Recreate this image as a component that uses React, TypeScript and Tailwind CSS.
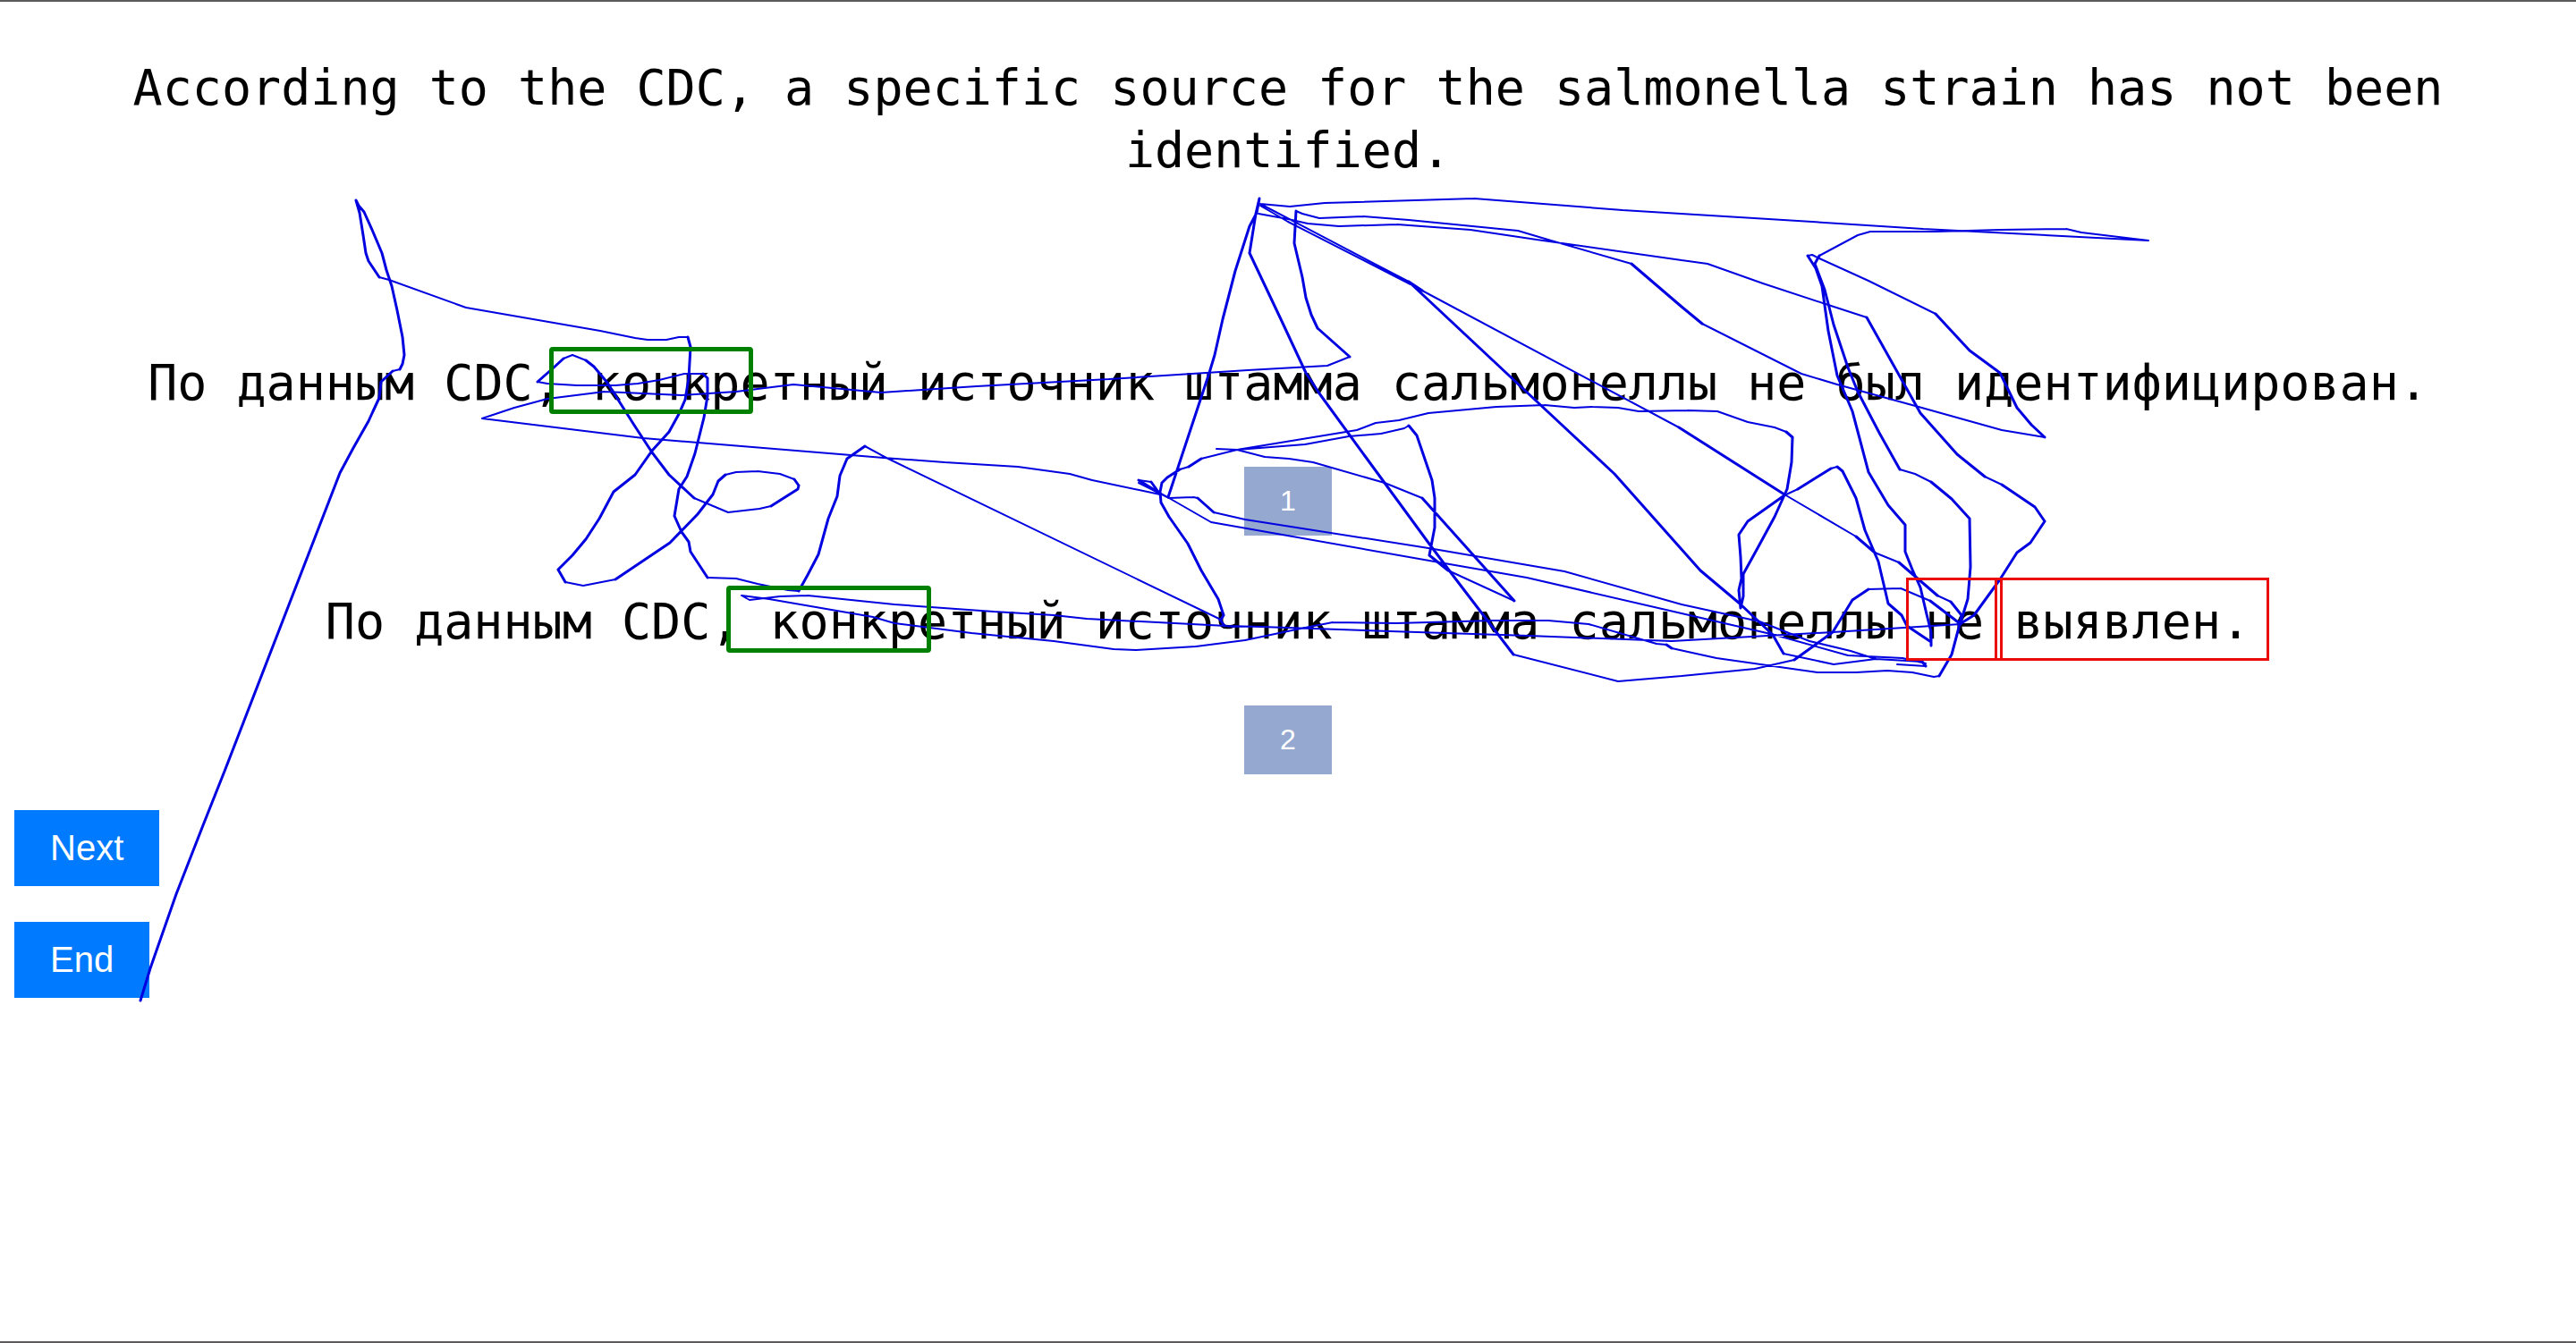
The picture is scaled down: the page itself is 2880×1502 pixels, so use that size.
import React from "react";

type Mark = "fixation" | "error";
type Part = { text: string; mark?: Mark };

const options: { id: number; parts: Part[] }[] = [
  {
    id: 1,
    parts: [
      { text: "По данным CDC," },
      { text: " конкр", mark: "fixation" },
      { text: "етный источник штамма сальмонеллы не был идентифицирован." },
    ],
  },
  {
    id: 2,
    parts: [
      { text: "По данным CDC," },
      { text: " конкр", mark: "fixation" },
      { text: "етный источник штамма сальмонеллы " },
      { text: "не", mark: "error" },
      { text: " " },
      { text: "выявлен.", mark: "error" },
    ],
  },
];

const markClass: Record<Mark, string> = {
  fixation:
    "absolute z-20 -inset-x-[15px] -top-[5px] bottom-0 rounded-sm border-[5px] border-[#008000]",
  error:
    "absolute z-20 -inset-x-[21px] -top-[14px] -bottom-[9px] border-[3px] border-[#ea0a0a]",
};

/* Recorded cursor trail, in page coordinates. */
const trail: string[] = [
  "157,1119 168,1083 197,1000 227,923 252,860 380,529 395,501 412,471 417,460 424,445 426,427 439,415 447,413 450,407 452,397 450,377 444,347 438,320 432,302 427,283 416,257 407,237 401,230 398,224 402,238 406,263 409,283 412,292 424,310 435,313 521,344 671,370 710,378 724,380 745,380 759,377 769,377 772,388 770,423 766,447 759,463 748,483 729,504 710,531 686,550 670,580 655,603 640,621 624,637 632,651 652,655 688,648 749,607 780,575 797,553 803,538 811,531 823,528 847,527 872,530 888,536 893,543 892,547 862,566 849,569 814,573 776,557 748,531 729,506 710,477 691,447 679,428 664,410 655,403 640,397 630,401 618,412 601,427 612,429 645,431 688,431 713,429 737,425 765,418 786,418 791,423 791,443 787,467 777,507 768,533 759,547 754,577 762,595 770,606 772,617 791,646 823,647 847,653 881,660 893,661 903,643 915,620 926,580 936,555 939,532 947,513 967,499 991,512 1365,693 1368,688 1362,670 1343,638 1328,608 1307,578 1298,562 1297,550 1299,540 1305,534 1319,525 1329,522 1343,513 1383,503 1517,481 1538,473 1564,470 1597,462 1673,455 1727,453 1760,456 1780,455 1809,456 1832,460 1887,459 1920,460 1954,472 1984,478 1997,483 2004,489 2003,517 1998,547 1984,578 1965,613 1949,642 1949,667 1946,680 1944,660 1947,647 1946,623 1944,598 1954,583 1995,554 2010,547 2047,524 2054,522 2060,527 2075,557 2085,593 2100,628 2108,662 2111,675 2126,688 2132,700 2159,718 2159,722 2159,707 2154,687 2147,657 2138,637 2130,617 2130,587 2111,565 2089,528 2071,460 2054,420 2044,370 2037,320 2030,300 2021,286 2026,285 2034,289 2089,314 2164,351 2202,392 2236,417 2255,456 2271,475 2286,489 2238,481 2145,455 2054,430 2014,418 1903,362 1880,343 1824,295 1734,269 1697,258 1575,246 1524,242 1475,244 1456,239 1449,236 1447,272 1456,310 1460,333 1466,352 1473,367 1509,399 1484,409 1395,414 1240,424 1092,432 985,439 887,430 823,438 762,442 676,438 612,446 575,456 539,468 719,490 988,512 1056,517 1138,522 1196,530 1221,537 1297,553 1287,539 1273,537 1294,550 1307,557 1334,556 1339,557 1357,573 1392,581 1597,613 1749,639 1880,676 1967,695 2023,717 2069,728 2097,737 2149,740 2153,745 2121,743",
  "1273,540 1307,557 1354,584 1615,630 1707,646 1880,686 1984,710 2066,733 2127,736 2153,742",
  "1306,556 1352,417 1358,397 1367,357 1381,303 1397,253 1405,238 1408,222 1404,239 1397,283 1432,357 1460,417 1475,440 1526,510 1597,607 1624,643 1692,732 1809,762 1880,756 1962,748 2006,738 2049,707 2071,671 2089,659 2125,658 2158,672 2192,698 2049,707 1869,717 1709,711 1615,708 1410,701 1371,700 1215,692 1178,688 1111,684 1000,676 903,666 872,667 838,671 829,666 860,670 976,690 1000,697 1086,708 1178,717 1245,726 1270,727 1337,723 1392,716 1454,703 1490,696 1561,697 1669,694 1731,694 1776,698 1852,720 1863,721 1869,725 1919,736 2032,752 2075,752 2110,750 2138,752 2162,757 2168,756 2182,732 2191,698 2207,688 2236,648 2255,618 2270,607 2286,583 2275,567 2238,542 2219,533 2188,508 2147,462 2087,355 2044,341 1971,317 1909,295 1880,291 1718,268 1644,257 1562,251 1497,253 1462,250 1440,245 1407,239",
  "1364,693 1369,700 1380,701",
  "1409,228 1442,231 1481,227 1648,222 1814,235 2010,247 2150,256 2402,269 2327,260 2310,256 2236,257 2164,259 2091,259 2077,263 2034,286 2029,295 2040,324 2050,363 2066,411 2077,438 2101,484 2124,525 2141,530 2159,539 2182,558 2202,580 2203,634 2200,670 2191,699",
  "1575,315 1590,325 1877,478 1995,553 2075,600 2096,618 2123,629 2166,666 2181,673 2193,688 2191,699",
  "1409,228 1575,315 1701,433 1805,530 1901,638 1945,675 1982,710 1994,731 2050,743 2097,737",
  "1360,502 1383,503 1459,497 1508,488 1544,485 1570,479 1575,476 1584,487 1601,537 1604,557 1604,590 1598,621 1619,638 1693,672 1590,557 1548,540 1468,517 1441,513 1414,511 1383,503 1360,502",
  "1409,230 1440,248 1577,318",
];

/* Splits the trail into flat strokes and steeper strokes, which are drawn heavier. */
function buildPaths(lines: string[]) {
  let flat = "";
  let steep = "";
  for (const line of lines) {
    const points = line.split(" ").map((p) => p.split(",").map(Number));
    for (let i = 1; i < points.length; i++) {
      const [x1, y1] = points[i - 1];
      const [x2, y2] = points[i];
      const segment = `M${x1} ${y1}L${x2} ${y2}`;
      if (Math.abs(y2 - y1) > Math.abs(x2 - x1) * 0.6) steep += segment;
      else flat += segment;
    }
  }
  return { flat, steep };
}

const paths = buildPaths(trail);

function CursorTrail() {
  return (
    <svg
      aria-hidden="true"
      className="pointer-events-none absolute inset-0 z-10 h-full w-full"
      viewBox="0 2 2880 1498"
      preserveAspectRatio="xMidYMin meet"
      fill="none"
      stroke="#0000e0"
      strokeLinecap="round"
    >
      <path d={paths.flat} strokeWidth={2} />
      <path d={paths.steep} strokeWidth={3} />
    </svg>
  );
}

function Sentence({ parts }: { parts: Part[] }) {
  return (
    <p>
      {parts.map((part, i) =>
        part.mark ? (
          <span key={i} className="relative inline-block whitespace-pre">
            {part.text}
            <span className={markClass[part.mark]} />
          </span>
        ) : (
          <React.Fragment key={i}>{part.text}</React.Fragment>
        ),
      )}
    </p>
  );
}

export default function App() {
  return (
    <main className="relative min-h-screen border-y-2 border-[#5c5a5a] bg-white pt-[61px] text-black">
      <div className="text-center font-['DejaVu_Sans_Mono',monospace] text-[55px] leading-[70px]">
        <h1>
          According to the CDC, a specific source for the salmonella strain has not been identified.
        </h1>
        <div className="mt-[190px] flex flex-col gap-[61px]">
          {options.map((option) => (
            <section key={option.id} className="flex flex-col items-center gap-[59px]">
              <Sentence parts={option.parts} />
              <button
                type="button"
                className="bg-[#94a8d0] px-10 py-5 font-['Liberation_Sans',sans-serif] text-[32px] leading-[37px] text-white"
              >
                {option.id}
              </button>
            </section>
          ))}
        </div>
      </div>
      <div className="mt-10 flex flex-col items-start gap-10 px-4 font-['Liberation_Sans',sans-serif] text-[40px] leading-[45px] text-white">
        <button type="button" className="bg-[#007bff] px-10 py-5">
          Next
        </button>
        <button type="button" className="bg-[#007bff] px-10 py-5">
          End
        </button>
      </div>
      <CursorTrail />
    </main>
  );
}
